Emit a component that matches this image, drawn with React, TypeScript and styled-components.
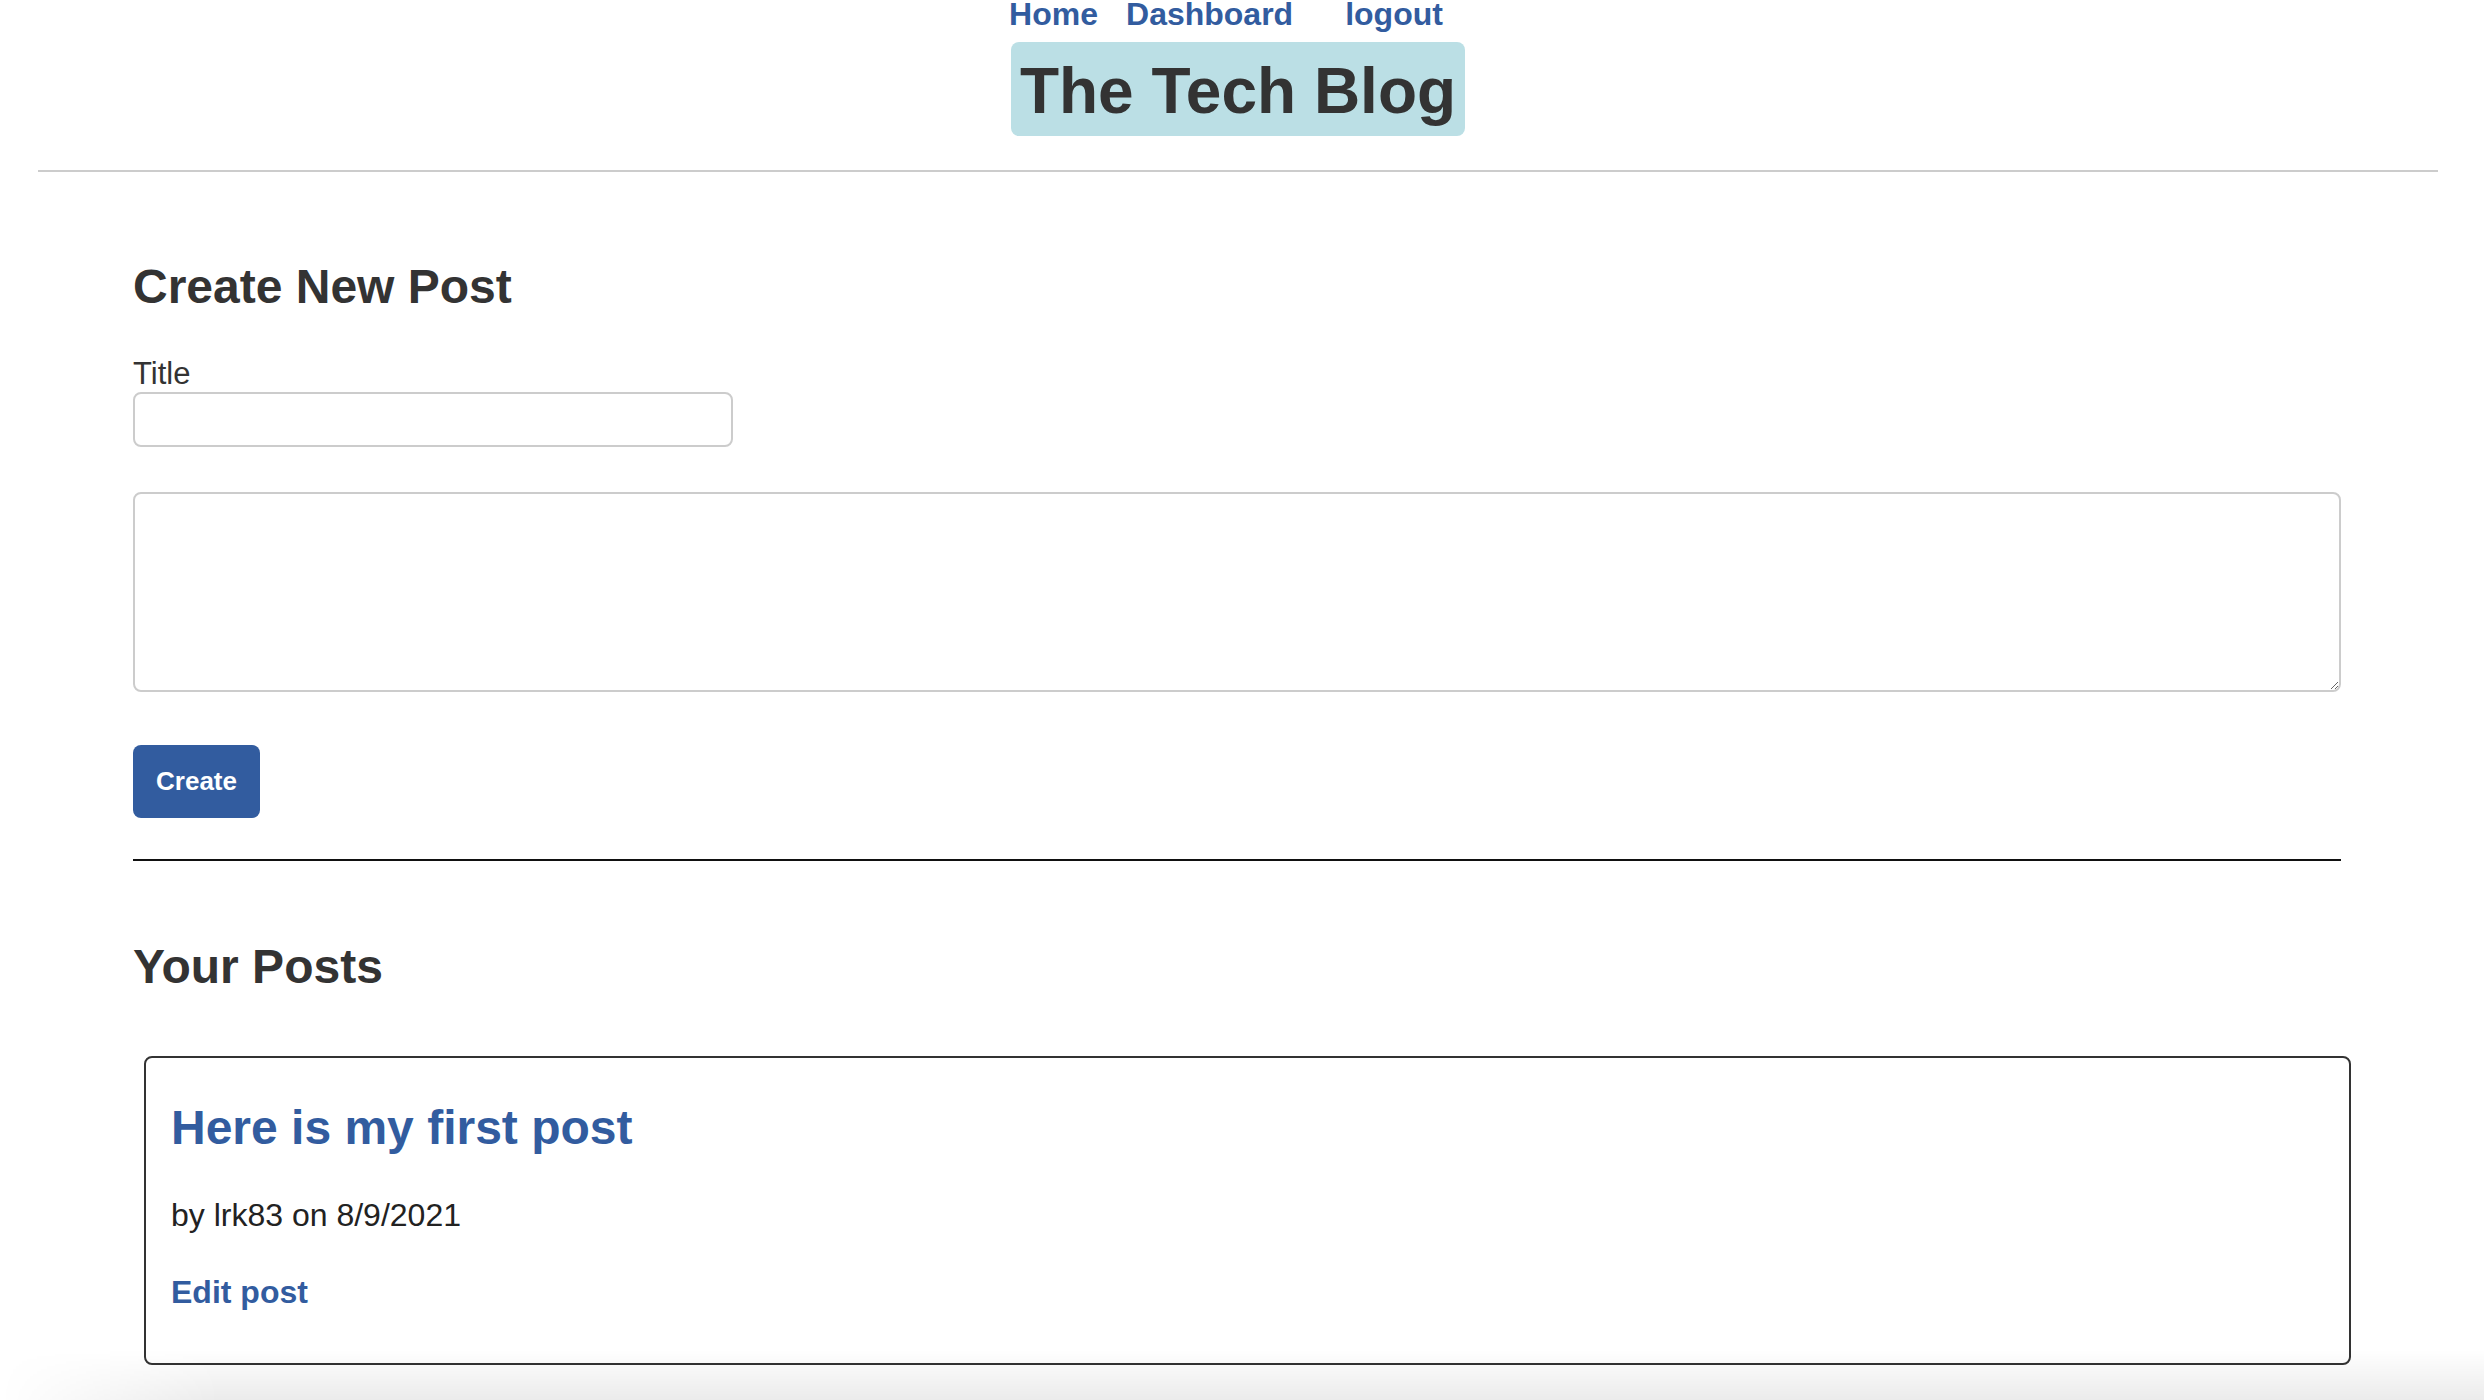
import React from "react";
import styled, { createGlobalStyle } from "styled-components";

const SANS = `"Liberation Sans", Arial, Helvetica, sans-serif`;
const BLUE = "#325c9f";
const INK = "#333333";

const GlobalStyle = createGlobalStyle`
  html, body {
    margin: 0;
    padding: 0;
    background: #ffffff;
    color: ${INK};
    font-family: ${SANS};
  }
  * { box-sizing: border-box; }
`;

const Page = styled.div`
  min-height: 1400px;
  position: relative;
`;

const Header = styled.header`
  display: flex;
  flex-direction: column;
  align-items: center;
  padding: 0 46px 0 38px;
`;

const Nav = styled.nav`
  display: flex;
  gap: 28px;
  padding-right: 24px;
  line-height: 28px;
`;

const NavLink = styled.a<{ $extra?: number }>`
  font-family: ${SANS};
  font-weight: 700;
  font-size: 32px;
  color: ${BLUE};
  text-decoration: none;
  margin-left: ${(p) => p.$extra ?? 0}px;
`;

const TitleBox = styled.h1`
  margin: 14px 0 0;
  padding: 5px 9px 0;
  height: 94px;
  line-height: 88px;
  background: #bbdfe5;
  border-radius: 8px;
  font-family: ${SANS};
  font-weight: 700;
  font-size: 64px;
  color: ${INK};
  white-space: nowrap;
`;

const HeaderRule = styled.hr`
  align-self: stretch;
  margin: 34px 0 0;
  border: 0;
  border-top: 2px solid #cccccc;
  height: 0;
`;

const Main = styled.main`
  padding: 0 143px 0 133px;
`;

const FormSection = styled.section`
  display: flex;
  flex-direction: column;
  align-items: flex-start;
`;

const SectionTitle = styled.h2<{ $top: number }>`
  margin: ${(p) => p.$top}px 0 0;
  font-family: ${SANS};
  font-weight: 700;
  font-size: 48px;
  line-height: 56px;
  color: ${INK};
`;

const Label = styled.label`
  margin-top: 41px;
  font-family: ${SANS};
  font-size: 31px;
  line-height: 36px;
  color: ${INK};
`;

const TitleInput = styled.input`
  margin-top: 0;
  width: 600px;
  height: 55px;
  border: 2px solid #cccccc;
  border-radius: 8px;
  background: #fff;
  font-size: 24px;
  padding: 0 12px;
  outline: none;
`;

const BodyInput = styled.textarea`
  margin-top: 45px;
  width: 100%;
  height: 200px;
  border: 2px solid #cccccc;
  border-radius: 8px;
  background: #fff;
  font-size: 24px;
  padding: 12px;
  outline: none;
  display: block;
`;

const CreateButton = styled.button`
  margin-top: 53px;
  width: 127px;
  height: 73px;
  border: 0;
  border-radius: 8px;
  background: ${BLUE};
  color: #ffffff;
  font-family: ${SANS};
  font-weight: 700;
  font-size: 26px;
  padding: 0;
  cursor: pointer;
`;

const DarkRule = styled.hr`
  align-self: stretch;
  margin: 41px 0 0;
  border: 0;
  border-top: 2px solid #111111;
  height: 0;
`;

const PostsSection = styled.section``;

const PostCard = styled.article`
  margin: 61px -10px 0 11px;
  border: 2px solid #333333;
  border-radius: 8px;
  padding: 42px 25px 52px;
`;

const PostTitle = styled.a`
  display: block;
  font-family: ${SANS};
  font-weight: 700;
  font-size: 48px;
  line-height: 56px;
  color: ${BLUE};
  text-decoration: none;
`;

const Byline = styled.p`
  margin: 41px 0 0;
  font-family: ${SANS};
  font-size: 32px;
  line-height: 36px;
  color: #222222;
`;

const EditLink = styled.a`
  display: block;
  margin-top: 40px;
  font-family: ${SANS};
  font-weight: 700;
  font-size: 32px;
  line-height: 38px;
  color: ${BLUE};
  text-decoration: none;
`;

const BottomShade = styled.div`
  position: fixed;
  left: 0;
  right: 0;
  bottom: 0;
  height: 50px;
  pointer-events: none;
  background: linear-gradient(to bottom, rgba(0, 0, 0, 0), rgba(0, 0, 0, 0.08));
  -webkit-mask-image: linear-gradient(to right, transparent 0, black 220px);
  mask-image: linear-gradient(to right, transparent 0, black 220px);
`;

export default function App() {
  return (
    <Page>
      <GlobalStyle />
      <Header>
        <Nav>
          <NavLink href="#">Home</NavLink>
          <NavLink href="#">Dashboard</NavLink>
          <NavLink href="#" $extra={24}>logout</NavLink>
        </Nav>
        <TitleBox>The Tech Blog</TitleBox>
        <HeaderRule />
      </Header>
      <Main>
        <FormSection>
          <SectionTitle $top={87}>Create New Post</SectionTitle>
          <Label htmlFor="post-title">Title</Label>
          <TitleInput id="post-title" type="text" />
          <BodyInput />
          <CreateButton type="button">Create</CreateButton>
          <DarkRule />
        </FormSection>
        <PostsSection>
          <SectionTitle $top={78}>Your Posts</SectionTitle>
          <PostCard>
            <PostTitle href="#">Here is my first post</PostTitle>
            <Byline>by lrk83 on 8/9/2021</Byline>
            <EditLink href="#">Edit post</EditLink>
          </PostCard>
        </PostsSection>
      </Main>
      <BottomShade />
    </Page>
  );
}
